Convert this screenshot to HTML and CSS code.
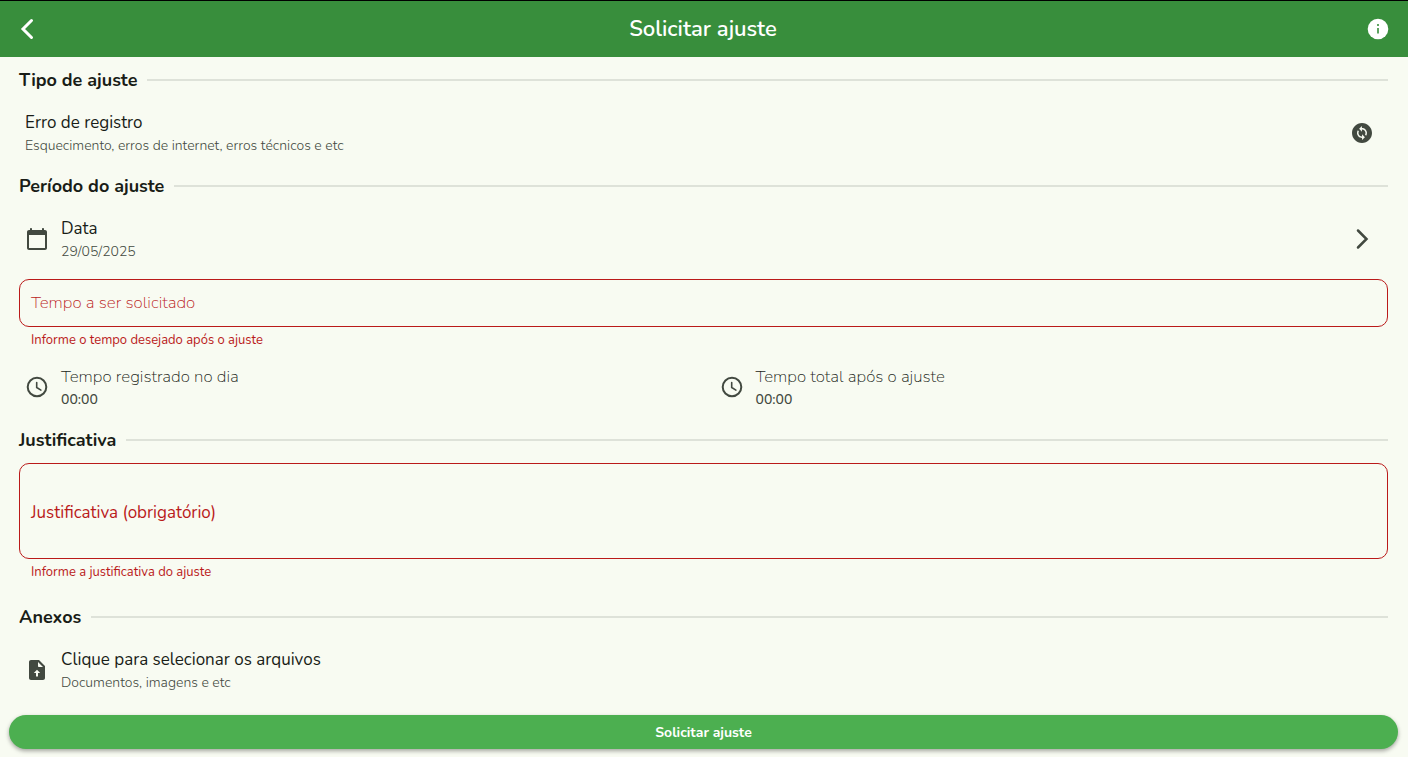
FILE: index.html
```html
<!DOCTYPE html>
<html lang="pt-BR">
<head>
<meta charset="utf-8">
<meta name="viewport" content="width=device-width, initial-scale=1">
<title>Solicitar ajuste</title>
<link rel="stylesheet" href="styles.css">
</head>
<body>
<header class="topbar">
  <button class="icon-button" type="button" aria-label="Voltar">
    <svg class="icon" viewBox="0 0 24 24" aria-hidden="true"><path class="stroke thick" d="M15.500 3.500 7 12l8.500 8.500"/></svg>
  </button>
  <h1 class="topbar-title">Solicitar ajuste</h1>
  <button class="icon-button" type="button" aria-label="Informações">
    <svg class="icon" viewBox="0 0 24 24" aria-hidden="true"><circle cx="12" cy="12" r="10.300" fill="currentColor"/><path class="info-mark" d="M12 11v5.500M12 7v2"/></svg>
  </button>
</header>

<form class="form">
  <main class="content">
    <section>
      <h2 class="section-title">Tipo de ajuste</h2>
      <button class="item" type="button">
        <span class="item-text">
          <span class="item-title">Erro de registro</span>
          <span class="item-sub">Esquecimento, erros de internet, erros técnicos e etc</span>
        </span>
        <svg class="icon" viewBox="0 0 24 24" aria-hidden="true"><path fill="currentColor" d="M12 2C6.480 2 2 6.480 2 12s4.480 10 10 10 10-4.480 10-10S17.520 2 12 2zm.060 17v-2.010H12c-1.280 0-2.560-.490-3.540-1.460-1.710-1.710-1.920-4.350-.640-6.290l1.100 1.100c-.710 1.330-.530 3.010.590 4.130.700.700 1.620 1.030 2.540 1.010v-2.140l2.830 2.830L12.060 19zm4.110-4.240-1.100-1.100c.710-1.330.530-3.010-.590-4.130C13.790 8.840 12.900 8.500 12 8.500h-.060v2.150L9.110 7.830 11.940 5v2.020c1.300-.020 2.610.450 3.600 1.450 1.700 1.700 1.910 4.350.630 6.290z"/></svg>
      </button>
    </section>

    <section>
      <h2 class="section-title">Período do ajuste</h2>
      <button class="item" type="button">
        <svg class="icon" viewBox="0 0 24 24" aria-hidden="true"><path fill="currentColor" d="M20 3h-1V2c0-.550-.450-1-1-1s-1 .450-1 1v1H7V2c0-.550-.450-1-1-1s-1 .450-1 1v1H4c-1.100 0-2 .900-2 2v16c0 1.100.900 2 2 2h16c1.100 0 2-.900 2-2V5c0-1.100-.900-2-2-2zm0 18H4V8h16v13z"/></svg>
        <span class="item-text">
          <span class="item-title">Data</span>
          <span class="item-sub">29/05/2025</span>
        </span>
        <svg class="icon" viewBox="0 0 24 24" aria-hidden="true"><path class="stroke" d="M8 3.500 16.500 12 8 20.500"/></svg>
      </button>
      <div class="field">
        <input class="field-input" id="tempo" type="text" aria-describedby="tempo-erro" aria-invalid="true">
        <label class="field-label light" for="tempo">Tempo a ser solicitado</label>
      </div>
      <p class="field-error" id="tempo-erro">Informe o tempo desejado após o ajuste</p>
      <div class="times">
        <div class="item">
          <svg class="icon" viewBox="0 0 24 24" aria-hidden="true"><circle class="stroke clock" cx="12" cy="12" r="9.300"/><path class="stroke hand" d="M11.700 7.500v5l4.200 2.600"/></svg>
          <span class="item-text">
            <span class="item-title light">Tempo registrado no dia</span>
            <span class="item-sub time">00:00</span>
          </span>
        </div>
        <div class="item">
          <svg class="icon" viewBox="0 0 24 24" aria-hidden="true"><circle class="stroke clock" cx="12" cy="12" r="9.300"/><path class="stroke hand" d="M11.700 7.500v5l4.200 2.600"/></svg>
          <span class="item-text">
            <span class="item-title light">Tempo total após o ajuste</span>
            <span class="item-sub time">00:00</span>
          </span>
        </div>
      </div>
    </section>

    <section class="reason">
      <h2 class="section-title">Justificativa</h2>
      <div class="field">
        <textarea class="field-input" id="justificativa" rows="3" aria-describedby="justificativa-erro" aria-invalid="true"></textarea>
        <label class="field-label" for="justificativa">Justificativa (obrigatório)</label>
      </div>
      <p class="field-error" id="justificativa-erro">Informe a justificativa do ajuste</p>
    </section>

    <section>
      <h2 class="section-title">Anexos</h2>
      <button class="item" type="button">
        <svg class="icon" viewBox="0 0 24 24" aria-hidden="true"><path fill="currentColor" fill-rule="evenodd" d="M14 2H6c-1.100 0-2 .900-2 2v16c0 1.100.900 2 2 2h12c1.100 0 2-.900 2-2V8l-6-6zm-1 2 5 5h-4c-.550 0-1-.450-1-1V4zm0 11v3.500h-2V15H8.800l3.200-3.300 3.200 3.300H13z"/></svg>
        <span class="item-text">
          <span class="item-title">Clique para selecionar os arquivos</span>
          <span class="item-sub">Documentos, imagens e etc</span>
        </span>
      </button>
    </section>
  </main>

  <footer class="actions">
    <button class="submit" type="submit">Solicitar ajuste</button>
  </footer>
</form>
</body>
</html>
```

FILE: styles.css
```css
* {
  box-sizing: border-box;
}

body {
  display: flex;
  flex-direction: column;
  min-height: 100vh;
  margin: 0;
  background: #f8fbf2;
  color: #191d17;
  font-family: Nunito, "Open Sans", "Noto Sans", sans-serif;
}

button,
input,
textarea {
  font: inherit;
  color: inherit;
}

button {
  border: 0;
  background: none;
  cursor: pointer;
}

.topbar {
  display: flex;
  align-items: center;
  justify-content: space-between;
  height: 57px;
  padding: 0 10px 0 8px;
  border-top: 1px solid #000;
  background: #388e3c;
  color: #fff;
}

.topbar-title {
  margin: 0;
  font-size: 22px;
  font-weight: 600;
  line-height: 28px;
}

.icon-button {
  display: flex;
  padding: 8px;
}

.icon {
  flex: none;
  width: 24px;
  height: 24px;
}

.stroke {
  fill: none;
  stroke: currentColor;
  stroke-width: 2.5;
  stroke-linecap: round;
}

.thick {
  stroke-width: 3;
}

.clock {
  stroke-width: 2;
}

.hand {
  stroke-width: 1.6;
}

.info-mark {
  stroke: #388e3c;
  stroke-width: 1.6;
}

.form {
  display: flex;
  flex: 1;
  flex-direction: column;
}

.content {
  flex: 1;
  padding: 10px 20px 0 19px;
}

.section-title {
  display: flex;
  align-items: center;
  gap: 10px;
  margin: 0;
  font-size: 18px;
  font-weight: 700;
  line-height: 26px;
}

.section-title::after {
  flex: 1;
  height: 2px;
  background: #dee2d9;
  content: "";
}

.item {
  display: flex;
  align-items: center;
  gap: 12px;
  width: 100%;
  padding: 17px 14px 17px 6px;
  text-align: left;
}

.item > .icon {
  color: #424940;
}

.item-text {
  display: flex;
  flex: 1;
  flex-direction: column;
}

.item-title {
  font-size: 17px;
  line-height: 26px;
}

.item-sub {
  color: #424940;
  font-size: 14px;
  font-weight: 300;
  line-height: 20px;
}

.light {
  font-weight: 200;
}

.time {
  font-weight: 500;
}

.times {
  display: grid;
  grid-template-columns: 1fr 1fr;
  gap: 20px;
}

.field {
  display: grid;
  align-items: center;
  color: #ba1a1a;
}

.field-input,
.field-label {
  grid-area: 1 / 1;
}

.field-input {
  display: block;
  width: 100%;
  padding: 11px;
  border: 1px solid #ba1a1a;
  border-radius: 10px;
  background: transparent;
  font-size: 17px;
  line-height: 24px;
  resize: none;
}

input.field-input {
  height: 48px;
}

.field-label {
  padding: 0 12px;
  font-size: 17px;
  line-height: 24px;
  pointer-events: none;
}

.field-error {
  margin: 0;
  padding: 6px 12px 0;
  color: #ba1a1a;
  font-size: 13px;
  line-height: 14px;
}

.reason {
  padding-bottom: 25px;
}

.reason .field {
  margin-top: 10px;
}

.reason .field-label {
  padding-top: 4px;
}

.actions {
  padding: 5px 10px 8px 9px;
}

.submit {
  width: 100%;
  padding: 8px 16px 6px;
  border-radius: 17px;
  background: #4caf50;
  box-shadow: 0 2px 4px rgba(0, 0, 0, 0.35);
  color: #fff;
  font-size: 14px;
  font-weight: 700;
  line-height: 20px;
}
```
